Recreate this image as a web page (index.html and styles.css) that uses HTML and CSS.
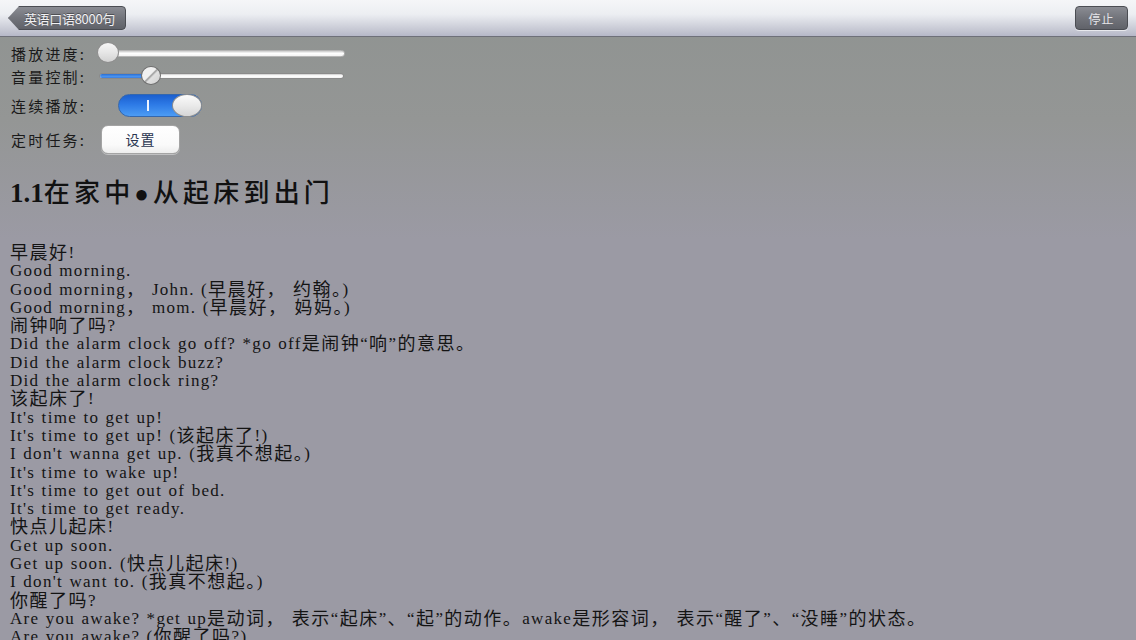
FILE: index.html
```html
<!DOCTYPE html>
<html lang="zh">
<head>
<meta charset="utf-8">
<title>英语口语8000句</title>
<link rel="stylesheet" href="styles.css">
</head>
<body>
<header class="navbar">
  <button class="back-btn"><span class="back-label">英语口语8000句</span></button>
  <button class="stop-btn">停止</button>
</header>
<main class="content">
  <section class="controls">
    <div class="row row-progress">
      <span class="label">播放进度:</span>
      <div class="slider slider-progress">
        <div class="track"></div>
        <div class="thumb"></div>
      </div>
    </div>
    <div class="row row-volume">
      <span class="label">音量控制:</span>
      <div class="slider slider-volume">
        <div class="track"><div class="fill"></div></div>
        <div class="thumb"></div>
      </div>
    </div>
    <div class="row row-switch">
      <span class="label">连续播放:</span>
      <div class="switch"><span class="on-mark"></span><span class="knob"></span></div>
    </div>
    <div class="row row-timer">
      <span class="label">定时任务:</span>
      <button class="set-btn">设置</button>
    </div>
  </section>
  <h1 class="title"><span class="num">1.1</span><span class="zh-title">在家中</span><span class="dot">●</span><span class="zh-title">从起床到出门</span></h1>
  <div class="lines">
    <p><span class="zh">早晨好</span>!</p>
    <p>Good morning.</p>
    <p>Good morning<span class="zh">，</span>&nbsp;John. (<span class="zh">早晨好， 约翰。</span>)</p>
    <p>Good morning<span class="zh">，</span>&nbsp;mom. (<span class="zh">早晨好， 妈妈。</span>)</p>
    <p><span class="zh">闹钟响了吗</span>?</p>
    <p>Did the alarm clock go off? *go off<span class="zh">是闹钟</span>“<span class="zh">响</span>”<span class="zh">的意思。</span></p>
    <p>Did the alarm clock buzz?</p>
    <p>Did the alarm clock ring?</p>
    <p><span class="zh">该起床了</span>!</p>
    <p>It's time to get up!</p>
    <p>It's time to get up! (<span class="zh">该起床了</span>!)</p>
    <p>I don't wanna get up. (<span class="zh">我真不想起。</span>)</p>
    <p>It's time to wake up!</p>
    <p>It's time to get out of bed.</p>
    <p>It's time to get ready.</p>
    <p><span class="zh">快点儿起床</span>!</p>
    <p>Get up soon.</p>
    <p>Get up soon. (<span class="zh">快点儿起床</span>!)</p>
    <p>I don't want to. (<span class="zh">我真不想起。</span>)</p>
    <p><span class="zh">你醒了吗</span>?</p>
    <p>Are you awake? *get up<span class="zh">是动词， 表示</span>“<span class="zh">起床</span>”<span class="zh">、</span>“<span class="zh">起</span>”<span class="zh">的动作。</span>awake<span class="zh">是形容词， 表示</span>“<span class="zh">醒了</span>”<span class="zh">、</span>“<span class="zh">没睡</span>”<span class="zh">的状态。</span></p>
    <p>Are you awake? (<span class="zh">你醒了吗</span>?)</p>
  </div>
</main>
</body>
</html>
```

FILE: styles.css
```css
* { box-sizing: border-box; }
html, body { margin: 0; padding: 0; height: 100%; overflow: hidden; }
body {
  background: linear-gradient(180deg, #8f9391 0px, #949695 120px, #9b9aa4 240px, #9b9aa4 100%);
  font-family: "Liberation Serif", "Noto Sans CJK SC", serif;
  color: #141414;
}

.navbar {
  height: 37px;
  display: flex;
  align-items: center;
  justify-content: space-between;
  padding: 0 8px 0 8px;
  background: linear-gradient(180deg, #f5f6f8 0%, #eceef2 40%, #c4c6d2 85%, #b6b8c8 100%);
  border-bottom: 1px solid #6e7079;
}
.back-btn, .stop-btn {
  height: 24px;
  border: 1px solid #4b4d53;
  background: linear-gradient(180deg, #8a8c93 0%, #72747b 50%, #606269 100%);
  color: #f1f1f3;
  font-family: "Noto Sans CJK SC", "Liberation Sans", sans-serif;
  padding: 0;
  box-shadow: 0 1px 0 rgba(255,255,255,0.6);
}
.back-btn {
  width: 118px;
  border-radius: 4px;
  padding-left: 5px;
  clip-path: polygon(0 50%, 11px 0, 100% 0, 100% 100%, 11px 100%);
  font-size: 13px;
  text-shadow: 0 -1px 0 rgba(0,0,0,0.35);
}
.back-label { letter-spacing: -0.3px; }
.stop-btn {
  width: 53px;
  border-radius: 4px;
  letter-spacing: 1px;
  font-size: 12px;
  color: #e4e4e8;
}

.content { padding: 0 0 0 10px; }

.controls {
  display: flex;
  flex-direction: column;
  padding-top: 5px;
}
.row {
  display: flex;
  align-items: center;
  font-family: "Noto Sans CJK SC", "Liberation Sans", sans-serif;
  font-size: 15px;
  color: #1a1a1a;
}
.label { width: 88px; padding-left: 1px; letter-spacing: 2.2px; white-space: nowrap; }
.row-progress { height: 22px; }
.row-volume { height: 22px; margin-top: 1px; }
.row-switch { height: 34px; margin-top: 1px; }
.row-timer { height: 34px; }

.slider { position: relative; width: 248px; height: 22px; }
.slider-progress { margin-left: -1px; }
.slider-volume { margin-left: 1px; width: 245px; }
.track {
  position: absolute;
  left: 0; right: 0; top: 7px;
  height: 8px;
  border-radius: 4px;
  background: linear-gradient(180deg, #c9c9c9 0%, #ffffff 45%, #f2f2f2 100%);
  border: 1px solid #8a8a8a;
  overflow: hidden;
}
.slider-progress .track { top: 8px; height: 7px; border-color: #b5b5b5; }
.slider-volume .track { top: 8px; height: 6px; }
.fill {
  height: 100%;
  width: 52px;
  background: linear-gradient(180deg, #2b6ed0 0%, #4a93ef 60%, #3a7fe0 100%);
}
.thumb {
  position: absolute;
  width: 22px; height: 21px;
  border-radius: 50%;
  background: linear-gradient(180deg, #f6f6f6 0%, #e6e6e6 50%, #d2d2d2 100%);
  border: 1px solid #8f8f8f;
  top: 0;
}
.slider-progress .thumb { left: 0; }
.slider-volume .thumb {
  left: 42px; top: 1px; width: 20px; height: 19px;
  background: linear-gradient(135deg, #f0f0f0 0%, #f0f0f0 45%, #9a9a9a 50%, #e0e0e0 58%, #d0d0d0 100%);
  border-color: #6f6f6f;
}

.switch {
  position: relative;
  margin-left: 20px;
  width: 84px;
  height: 23px;
  border-radius: 12px;
  background: linear-gradient(180deg, #1b5fcf 0%, #2d7ae6 45%, #4c9cf4 100%);
  border: 1px solid #3467ad;
}
.on-mark {
  position: absolute;
  left: 28px; top: 5px;
  width: 2px; height: 11px;
  background: #eef4ff;
}
.knob {
  position: absolute;
  right: -1px; top: -1px;
  width: 30px; height: 23px;
  border-radius: 50%;
  background: linear-gradient(180deg, #fbfbfb 0%, #e8e8e8 55%, #d6d6d6 100%);
  border: 1px solid #8e8e8e;
}

.set-btn {
  margin-left: 3px;
  width: 79px; height: 29px;
  border-radius: 7px;
  border: 1px solid #a4a4a4;
  background: linear-gradient(180deg, #ffffff 0%, #fafafa 70%, #ededed 100%);
  font-family: "Noto Sans CJK SC", "Liberation Sans", sans-serif;
  font-size: 14px;
  color: #2a3550;
  letter-spacing: 1px;
  box-shadow: 0 1px 0 rgba(255,255,255,0.4);
}

.title {
  margin: 18px 0 0 0;
  height: 34px;
  line-height: 34px;
  font-family: "Liberation Serif", "Noto Sans CJK SC", serif;
  color: #111;
  font-weight: 400;
  white-space: nowrap;
}
.title span { line-height: 20px; }
.num { font-size: 27px; font-weight: 700; }
.zh-title {
  font-size: 26px;
  font-weight: 500;
  letter-spacing: 4.2px;
  font-family: "Noto Sans CJK SC", "Liberation Serif", sans-serif;
}
.dot {
  font-family: "Liberation Serif", "DejaVu Serif", serif;
  font-size: 24px;
  margin: 0 4px 0 0;
}

.lines { margin-top: 36px; }
.lines p {
  margin: 0;
  height: 18.3px;
  font-size: 17px;
  line-height: 18.3px;
  letter-spacing: 1.3px;
  word-spacing: 0.8px;
  white-space: nowrap;
}
.zh {
  font-size: 18px;
  letter-spacing: 1.5px;
  line-height: 10px;
  vertical-align: -1px;
}
```
